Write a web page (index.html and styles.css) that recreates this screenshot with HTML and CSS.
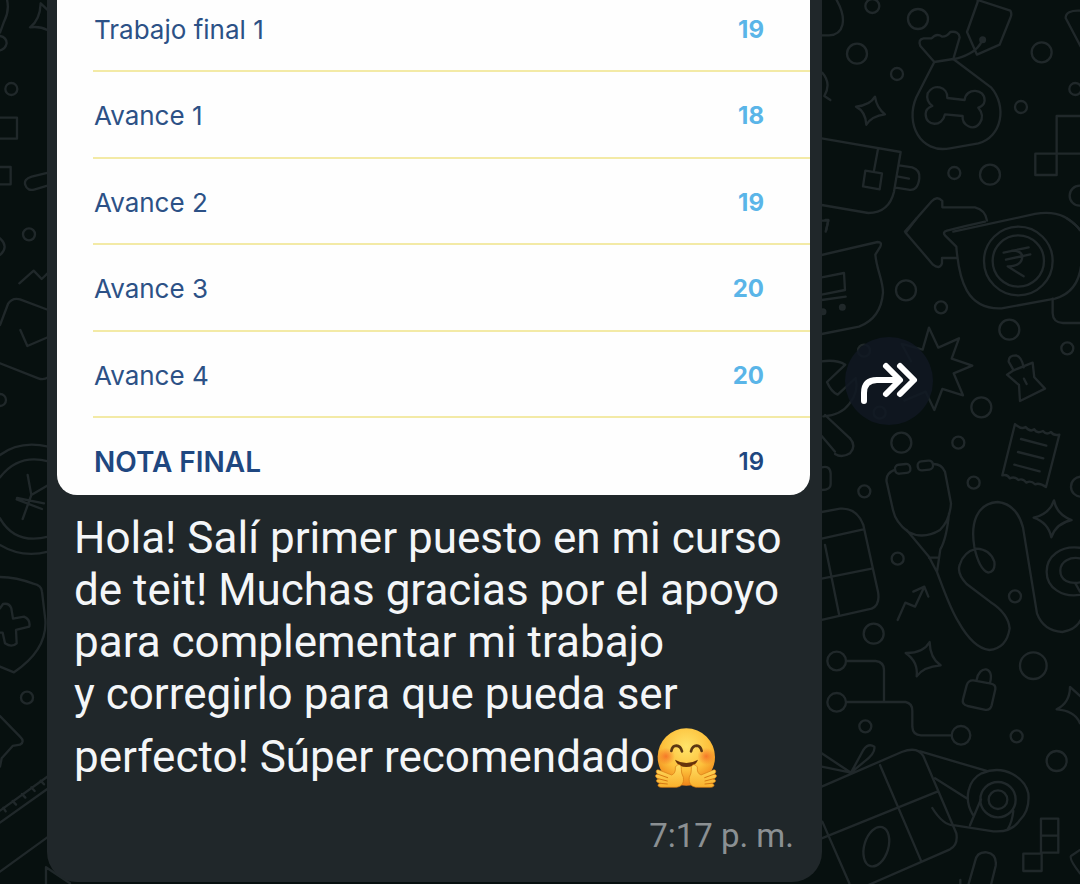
FILE: index.html
```html
<!DOCTYPE html>
<html lang="es">
<head>
<meta charset="utf-8">
<meta name="viewport" content="width=device-width, initial-scale=1">
<title>Chat</title>
<link rel="stylesheet" href="styles.css">
</head>
<body>
<main class="chat">
  <svg class="wallpaper" viewBox="0 0 1080 884" preserveAspectRatio="xMaxYMin slice" aria-hidden="true">
    <g transform="translate(815 0) scale(.3333)">
      <circle cx="172" cy="18" r="21"/><circle cx="309" cy="57" r="30"/><circle cx="126" cy="161" r="30"/><circle cx="246" cy="222" r="18"/>
      <circle cx="680" cy="157" r="30"/><circle cx="781" cy="267" r="18"/><circle cx="618" cy="321" r="18"/><circle cx="418" cy="519" r="18"/><circle cx="525" cy="524" r="30"/><circle cx="794" cy="587" r="30"/>
      <path d="M62-5C100 60 85 104 42 106H20M22 218Q50 250 28 288L46 300"/>
      <path d="M180 290Q185 324 210 343Q170 348 154 374Q152 335 123 320Q165 316 180 290Z"/>
      <path d="M488 0L586 32Q592 42 586 54L554 134L486 164L456 96L488 6ZM502 120Q492 145 465 160T415 177"/><circle cx="503" cy="119" r="7" class="dot"/>
      <path d="M358 186L316 138Q308 118 326 115L350 115Q364 98 382 110Q396 110 406 96Q432 92 434 112L415 177ZM358 186Q330 240 304 292C270 370 315 462 405 445L490 430C560 412 578 320 528 262L415 177"/>
      <path d="M397 294L449 300C452 262 510 264 509 302Q507 318 490 323Q510 346 494 370C475 395 440 376 443 348L390 343C382 382 332 380 332 342Q332 325 352 318Q332 302 338 280C355 248 399 260 397 294Z"/>
      <path d="M20 415L257 456L237 575Q222 638 160 639L20 615M189 447L177 512M151 512L201 520L194 568L144 559ZM252 496L292 502Q316 510 313 535Q308 575 280 569L242 563M250 530L282 536"/>
      <path d="M270 695L350 604Q366 586 382 603V622H480Q512 630 516 662M415 695L660 642Q745 625 795 690M795 32Q752 30 752 54L800 145"/>
      <path d="M800 348H725V525H661V461H800"/><path d="M22 662H40L32 695"/>
    </g>
    <g transform="translate(815 220) scale(.3333)">
      <path d="M305-5L272 38L354 134Q374 150 381 130V114H427M510 5Q450 18 396 32Q382 36 390 46L424 80C432 180 455 270 560 265L720 236Q795 215 800 120M755-5Q785 15 795 30"/>
      <circle cx="610" cy="123" r="103"/><circle cx="610" cy="123" r="77"/>
      <path d="M566 98L641 82M573 119L646 103M591 92Q622 92 622 112Q618 140 578 139L626 169"/>
      <path d="M713 236V280Q714 308 744 309H800M20 105L188 66Q202 66 196 80L181 104C185 150 204 180 204 218Q198 295 132 320L20 342M20 172L87 159L90 210L20 224M20 240L92 230M31 0H40L34 30"/>
      <circle cx="82" cy="262" r="7" class="dot"/><circle cx="24" cy="275" r="7" class="dot"/>
      <circle cx="273" cy="211" r="30"/><circle cx="378" cy="262" r="18"/><circle cx="583" cy="329" r="30"/><circle cx="757" cy="385" r="18"/><circle cx="499" cy="562" r="30"/><circle cx="147" cy="392" r="18"/><circle cx="194" cy="578" r="18"/>
      <path d="M260 372L323 389L342 323L370 383L432 355L410 416L472 437L416 460L444 526L382 507L358 570L332 515L268 542M260 372L288 424"/>
      <path d="M20 424Q65 418 91 434L36 486Q48 515 68 524L122 474Q132 515 104 550Q78 586 25 589M30 585L105 655M20 648L60 695"/>
      <path d="M596 451L581 425Q580 406 603 406Q620 410 626 442M596 451L653 428L658 472L690 506L615 543L612 495L576 464Z M627 476L635 492"/>
    </g>
    <g transform="translate(815 430) scale(.3333)">
      <path d="M60 72Q80 85 105 70Q125 48 105 25M20 112Q45 105 47 130V160Q48 180 20 180"/>
      <circle cx="259" cy="38" r="30"/><circle cx="430" cy="38" r="18"/><circle cx="148" cy="184" r="18"/><circle cx="476" cy="158" r="18"/><circle cx="248" cy="386" r="18"/><circle cx="600" cy="499" r="18"/><circle cx="176" cy="611" r="30"/><circle cx="798" cy="170" r="30"/>
      <path d="M600-18L562 136Q578 132 584 145Q600 138 610 150Q624 144 634 158Q648 150 660 163Q674 157 693 171L733 14Q716 18 708 6Q694 16 684 3Q665 12 658-2Q645 7 632-9Q618 0 600-18ZM618 27L694 47M609 66L685 85M598 104L674 124"/>
      <rect x="240" y="103" width="46" height="27" rx="12" transform="rotate(-6 263 116)"/><rect x="308" y="93" width="46" height="27" rx="12" transform="rotate(-6 331 106)"/>
      <path d="M240 119Q208 132 216 160L234 240Q242 278 280 306Q325 330 375 300Q405 270 408 220L390 125Q380 102 355 102M275 300L342 380Q352 400 366 426C390 490 405 535 430 575Q475 655 523 660Q575 655 584 595Q580 550 525 515L455 462Q425 430 434 405Q446 365 485 356Q525 358 538 395Q542 425 520 428Q492 418 478 350C466 280 485 220 548 216Q605 222 624 292L666 550Q685 602 742 606Q785 600 800 565M402 250Q395 325 376 358L366 426M342 383H370"/>
      <path d="M717 211Q725 254 770 270Q723 280 709 322Q700 278 656 263Q704 252 717 211Z"/><path d="M800 354C735 344 695 380 695 425C695 472 740 505 800 494M800 386C765 378 736 395 736 422C736 450 762 465 800 456M780 458L795 485"/>
      <path d="M20 246L75 236Q125 232 145 285L189 485Q196 525 170 536L20 570M20 326L145 298M20 446L170 416M30 345L72 552M248 570L271 518L300 530L328 470M295 485L328 470L340 500"/>
    </g>
    <g transform="translate(815 650) scale(.3333)">
      <path d="M344-24Q345 25 377 46Q325 50 305 79Q310 35 272 9Q325 10 344-24Z"/><circle cx="655" cy="47" r="40"/>
      <circle cx="65" cy="33" r="28"/><circle cx="65" cy="157" r="28"/><path d="M93 33H182Q207 36 207 60V155M93 156H272Q292 160 292 182V230Q293 255 318 256H410"/><circle cx="438" cy="256" r="28"/><circle cx="151" cy="229" r="18"/><circle cx="605" cy="259" r="18"/><circle cx="725" cy="333" r="30"/>
      <path d="M475 91L528 101Q543 104 541 118L530 166Q525 183 508 179L458 168Q440 163 444 148L455 106Q460 90 475 91ZM485 90C492 44 540 48 525 99"/>
      <path d="M800 142L765 111Q765 158 725 178Q780 182 795 220M20 410L260 306Q308 288 325 318L424 550Q430 585 405 598L160 705M195 345L318 632M20 565L367 425M22 515L103 700M20 310L108 368L20 350M108 368L145 300Q160 278 178 290Q182 310 148 335L108 368"/>
      <ellipse cx="184" cy="590" rx="36" ry="61" transform="rotate(17 184 590)"/>
      <circle cx="549" cy="449" r="53"/><circle cx="549" cy="449" r="28"/>
      <path d="M316 304L515 363M474 495C444 445 460 390 500 370C570 340 630 385 640 430Q645 480 615 510Q590 548 535 544L420 526Q385 528 352 474M360 385L455 445M498 448L465 526M595 483Q592 515 578 538M678 506H730V608H678ZM678 557H730M625 611H680V663H625ZM795 600L768 618Q762 628 795 670M460 705L480 635Q485 605 515 607Q547 612 542 648L528 705M436 690V705"/>
    </g>
    <g transform="scale(.3333)">
      <path d="M20-5Q30 30 12 65L0 98M0 108Q20 112 20 130Q16 148 0 151M122 10Q120 60 90 82Q120 78 142 90M122 10L145 32M0 353H51V416H0M0 501H32V553H0M145 518L95 530Q70 538 76 555Q82 575 105 568L145 556M0 715Q28 740 0 765M58 850L101 812L125 837L145 818M0 975L24 912Q36 892 60 898L145 930M0 1090L115 1135Q130 1141 145 1132M61 990L82 1038L145 1011"/>
      <circle cx="34" cy="267" r="18"/><circle cx="87" cy="703" r="18"/><circle cx="0" cy="1200" r="18"/>
    </g>
    <g transform="translate(0 430) scale(.3333)">
      <path d="M0 75Q60 30 145 50M0 142Q55 70 145 94M0 265Q45 345 145 320M0 345Q65 385 145 365M83 135L94 195L145 165M94 195L68 267M51 204L132 220M50 208L126 237"/>
      <path d="M0 441Q50 442 100 461Q125 466 126 485L136 570Q142 660 42 727L0 710M0 535L9 522Q28 518 34 535L39 566L72 560Q92 568 88 590L48 600L50 640Q35 654 15 640L8 608H0M0 858L60 920Q76 935 60 944L38 948L5 985L0 1010M0 1142L145 1038M0 1178L145 1075M10 1133L17 1144M38 1113L48 1124M66 1092L76 1103M94 1072L104 1083M122 1052L132 1063M0 1325L145 1220M138 1370V1312L210 1360"/>
      <circle cx="81" cy="803" r="18"/>
    </g>
  </svg>

  <article class="bubble">
    <div class="photo">
      <table class="grades">
        <tbody>
          <tr><th scope="row">Trabajo final 1</th><td>19</td></tr>
          <tr><th scope="row">Avance 1</th><td>18</td></tr>
          <tr><th scope="row">Avance 2</th><td>19</td></tr>
          <tr><th scope="row">Avance 3</th><td>20</td></tr>
          <tr><th scope="row">Avance 4</th><td>20</td></tr>
        </tbody>
        <tfoot>
          <tr><th scope="row">NOTA FINAL</th><td>19</td></tr>
        </tfoot>
      </table>
    </div>
    <p class="text">Hola! Salí primer puesto en mi curso<br>de teit! Muchas gracias por el apoyo<br>para complementar mi trabajo<br>y corregirlo para que pueda ser<br>perfecto! Súper recomendado<svg class="emoji" viewBox="0 0 186 183" role="img" aria-label="Cara abrazando">
      <defs>
        <radialGradient id="face" cx=".5" cy=".32" r=".68"><stop offset="0" stop-color="#ffe46a"/><stop offset=".6" stop-color="#fdc13c"/><stop offset="1" stop-color="#ef8418"/></radialGradient>
        <radialGradient id="blush"><stop offset="0" stop-color="#f2591f" stop-opacity=".7"/><stop offset="1" stop-color="#f2591f" stop-opacity="0"/></radialGradient>
        <linearGradient id="hand" x2="0" y2="1"><stop offset="0" stop-color="#ffdd62"/><stop offset="1" stop-color="#f9b02c"/></linearGradient>
      </defs>
      <circle cx="94" cy="90" r="86" fill="url(#face)"/>
      <ellipse cx="33" cy="88" rx="27" ry="26" fill="url(#blush)"/><ellipse cx="154" cy="88" rx="27" ry="26" fill="url(#blush)"/>
      <path d="M49 72Q52 56 64 56Q77 57 81 73M108 73Q112 56 125 56Q137 57 140 72" fill="none" stroke="#5c3813" stroke-width="8" stroke-linecap="round"/>
      <path d="M60 98Q94 118 129 98Q121 120 94 120Q68 120 60 98Z" fill="#67330b"/>
      <path d="M61 120C70 108 80 112 79 127Q78 137 85 151C88 170 78 181 60 181H19C7 181 5 171 17 169C2 168 0 157 12 156C-2 152-1 141 9 142C-1 135 4 124 14 130L50 144Q63 139 61 120Z" fill="url(#hand)" stroke="#d67912" stroke-width="2"/>
      <path d="M127 120C118 108 108 112 109 127Q110 137 103 151C100 170 110 181 128 181H167C179 181 181 171 169 169C184 168 186 157 174 156C188 152 187 141 177 142C187 135 182 124 172 130L138 144Q125 139 127 120Z" fill="url(#hand)" stroke="#d67912" stroke-width="2"/>
      <path d="M10 142L38 152M13 156L37 162M17 169L37 171M176 142L149 152M173 156L150 162M169 169L150 171" fill="none" stroke="#d67912" stroke-width="3" stroke-linecap="round"/>
    </svg></p>
    <time class="time" datetime="19:17">7:17 p. m.</time>
  </article>

  <button class="forward" type="button" aria-label="Reenviar">
    <svg viewBox="0 0 88 88" aria-hidden="true"><path d="M19 64V56Q19 43 32 43H52M41 29L55 43L41 57M55 29L69 43L55 57"/></svg>
  </button>
</main>
</body>
</html>
```
FILE: styles.css
```css
* {
  box-sizing: border-box;
}

body {
  margin: 0;
  background: #07100f;
  font-family: Roboto, "Noto Sans", sans-serif;
}

.chat {
  position: relative;
  display: flex;
  align-items: flex-start;
  min-height: 100vh;
  padding: 0 147px 2px 47px;
  overflow: hidden;
}

.wallpaper {
  position: absolute;
  inset: 0;
  width: 100%;
  height: 100%;
  fill: none;
  stroke: #20282a;
  stroke-width: 7;
  stroke-linecap: round;
  stroke-linejoin: round;
}

.wallpaper .dot {
  fill: #20282a;
}

.bubble {
  position: relative;
  flex: 1;
  display: flex;
  flex-direction: column;
  padding: 0 12px 26px 10px;
  border-radius: 0 0 30px 30px;
  background: #20272a;
}

.photo {
  padding-left: 36px;
  border-radius: 0 0 20px 20px;
  background: #fefefe;
}

.grades {
  width: 100%;
  border-collapse: separate;
  border-spacing: 0;
  font-family: Inter, "Liberation Sans", sans-serif;
  font-size: 26px;
  line-height: 32px;
  color: #2c5186;
}

.grades th,
.grades td {
  height: 87px;
  padding: 3px 0 0 1px;
  border-bottom: 2px solid #f3eaa6;
  font-weight: 400;
  text-align: left;
}

.grades tbody tr:nth-child(odd) > * {
  height: 86px;
}

.grades td {
  padding-right: 46px;
  font-size: 24px;
  font-weight: 700;
  text-align: right;
  color: #5ab5e8;
}

.grades tbody tr:first-child > * {
  height: 72px;
  padding-top: 1px;
  padding-bottom: 12px;
}

.grades tfoot tr > * {
  height: 77px;
  padding-top: 11px;
  border-bottom: 0;
  font-weight: 600;
  color: #1f4780;
}

.grades tfoot th {
  font-size: 28px;
}

.text {
  margin: 17px 0 0;
  padding-left: 17px;
  font-size: 44px;
  line-height: 52px;
  color: #f4f6f8;
}

.emoji {
  width: 62px;
  height: 61px;
  margin-top: 7px;
  vertical-align: -16px;
}

.time {
  align-self: flex-end;
  margin-top: 28px;
  padding-right: 16px;
  font-size: 33px;
  line-height: 40px;
  color: #8b9093;
}

.forward {
  position: relative;
  align-self: center;
  width: 88px;
  height: 88px;
  margin: 0 0 120px 23px;
  padding: 0;
  border: 0;
  border-radius: 50%;
  background: rgba(16, 23, 34, 0.85);
  cursor: pointer;
}

.forward svg {
  display: block;
  width: 88px;
  height: 88px;
  fill: none;
  stroke: #fff;
  stroke-width: 6;
  stroke-linecap: round;
  stroke-linejoin: round;
}
```
